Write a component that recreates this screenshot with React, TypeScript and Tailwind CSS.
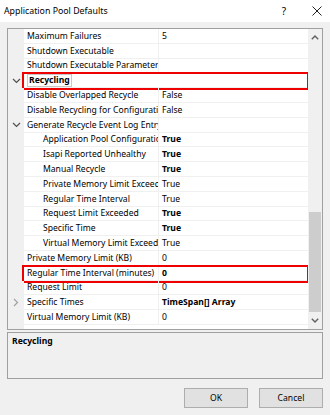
import React from "react";

type Row = {
  name: string;
  value?: string;
  level?: 0 | 1;
  bold?: boolean;
  nameBold?: boolean;
  chevron?: "down" | "right";
  mark?: boolean;
  focus?: boolean;
};

const rows: Row[] = [
  { name: "Maximum Failures", value: "5" },
  { name: "Shutdown Executable", value: "" },
  { name: "Shutdown Executable Parameters", value: "" },
  { name: "Recycling", nameBold: true, chevron: "down", mark: true, focus: true },
  { name: "Disable Overlapped Recycle", value: "False" },
  { name: "Disable Recycling for Configuration Changes", value: "False" },
  { name: "Generate Recycle Event Log Entry", value: "", chevron: "down" },
  { name: "Application Pool Configuration Changed", value: "True", level: 1, bold: true },
  { name: "Isapi Reported Unhealthy", value: "True", level: 1, bold: true },
  { name: "Manual Recycle", value: "True", level: 1, bold: true },
  { name: "Private Memory Limit Exceeded", value: "True", level: 1 },
  { name: "Regular Time Interval", value: "True", level: 1 },
  { name: "Request Limit Exceeded", value: "True", level: 1, bold: true },
  { name: "Specific Time", value: "True", level: 1, bold: true },
  { name: "Virtual Memory Limit Exceeded", value: "True", level: 1 },
  { name: "Private Memory Limit (KB)", value: "0" },
  { name: "Regular Time Interval (minutes)", value: "0", bold: true, mark: true },
  { name: "Request Limit", value: "0" },
  { name: "Specific Times", value: "TimeSpan[] Array", bold: true, chevron: "right" },
  { name: "Virtual Memory Limit (KB)", value: "0" },
];

function Chevron({ dir }: { dir: "down" | "right" }) {
  if (dir === "down") {
    return (
      <svg width="9" height="6" viewBox="0 0 9 6" className="text-[#505050]">
        <path d="M1 1l3.5 3.5L8 1" fill="none" stroke="currentColor" strokeWidth="1.2" />
      </svg>
    );
  }
  return (
    <svg width="6" height="9" viewBox="0 0 6 9" className="text-[#a0a0a0]">
      <path d="M1 1l3.5 3.5L1 8" fill="none" stroke="currentColor" strokeWidth="1.2" />
    </svg>
  );
}

function GridRow({ row }: { row: Row }) {
  return (
    <div className="relative flex h-[14.8px] shrink-0">
      <div className="w-[16px] shrink-0 bg-[#f0f0f0] flex items-center justify-center">
        {row.chevron && <Chevron dir={row.chevron} />}
      </div>
      <div
        className={`w-[134px] shrink-0 overflow-hidden whitespace-nowrap border-b border-[#f0f0f0] flex items-center ${
          row.level === 1 ? "pl-[19px]" : "pl-[3px]"
        }`}
      >
        <span
          className={
            row.focus
              ? "font-bold border border-[#c8c8c8] px-[1px] leading-[11px]"
              : row.nameBold
              ? "font-bold"
              : ""
          }
        >
          {row.name}
        </span>
      </div>
      {row.value !== undefined && (
        <div className="flex-1 border-l border-b border-[#f0f0f0] flex items-center pl-[3px] overflow-hidden whitespace-nowrap">
          <span className={row.bold ? "font-bold" : ""}>{row.value}</span>
        </div>
      )}
      {row.value === undefined && <div className="flex-1 border-b border-[#f0f0f0]" />}
      {row.mark && (
        <div className="absolute left-[14px] right-[-1px] top-[-1px] bottom-[-2px] border-2 border-[#ee0000]" />
      )}
    </div>
  );
}

export default function App() {
  return (
    <div className="w-[330px] h-[415px] bg-[#f0f0f0] flex flex-col text-[8.6px] leading-[12px] text-black font-['Noto_Sans',sans-serif] overflow-hidden relative">
      <div className="h-[22px] bg-white flex items-center pl-[4px] pr-[8px] text-[8.8px]">
        <span className="flex-1">Application Pool Defaults</span>
        <span className="mr-[26px] text-[10px]">?</span>
        <svg width="10" height="10" viewBox="0 0 10 10">
          <path d="M0.5 0.5l9 9M9.5 0.5l-9 9" stroke="#222" strokeWidth="1" />
        </svg>
      </div>

      <div className="px-[7px] pt-[6px] flex flex-col">
        <div className="h-[302px] border border-[#a0a0a0] bg-white flex">
          <div className="flex-1 flex flex-col overflow-hidden">
            {rows.map((r) => (
              <GridRow key={r.name} row={r} />
            ))}
            <div className="flex-1 flex">
              <div className="w-[16px] bg-[#f0f0f0]" />
            </div>
          </div>
          <div className="w-[14px] bg-[#f0f0f0] flex flex-col items-stretch">
            <div className="h-[17px] flex items-center justify-center">
              <svg width="8" height="5" viewBox="0 0 8 5">
                <path d="M0.8 4.2L4 1l3.2 3.2" fill="none" stroke="#606060" strokeWidth="1.4" />
              </svg>
            </div>
            <div className="h-[166px]" />
            <div className="h-[100px] bg-[#cdcdcd] mx-[1px]" />
            <div className="flex-1 flex items-center justify-center">
              <svg width="8" height="5" viewBox="0 0 8 5">
                <path d="M0.8 0.8L4 4l3.2-3.2" fill="none" stroke="#606060" strokeWidth="1.4" />
              </svg>
            </div>
          </div>
        </div>

        <div className="mt-[2px] h-[47px] border border-[#a0a0a0] px-[4px] pt-[2px]">
          <span className="font-bold">Recycling</span>
        </div>
      </div>

      <div className="flex justify-end gap-[11px] pr-[7px] mt-[9px]">
        <button className="w-[64px] h-[20px] bg-[#e1e1e1] border border-[#adadad]">OK</button>
        <button className="w-[64px] h-[20px] bg-[#e1e1e1] border border-[#adadad]">Cancel</button>
      </div>
    </div>
  );
}
